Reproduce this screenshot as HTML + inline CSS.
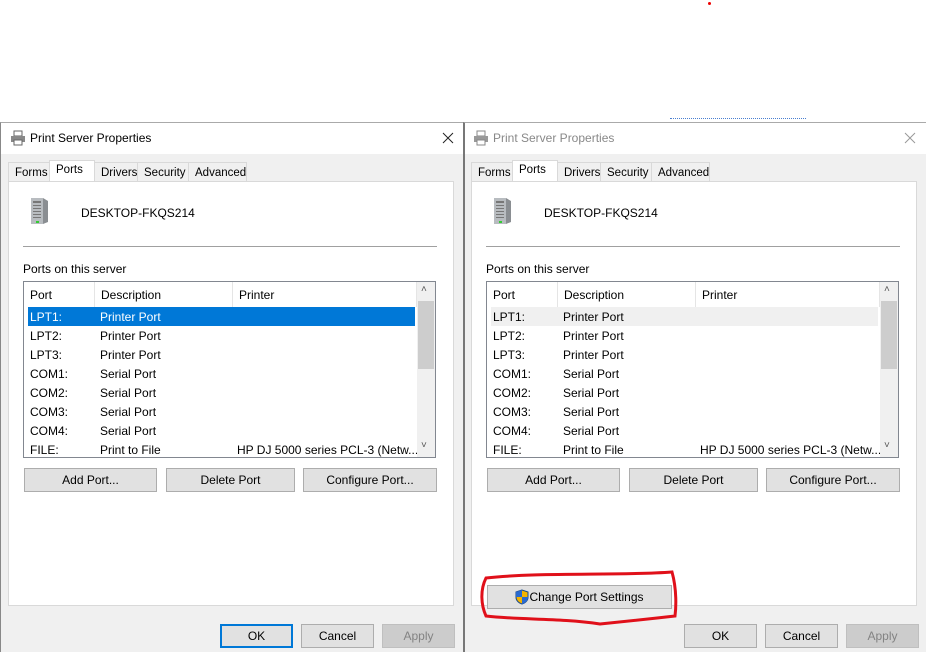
<!DOCTYPE html>
<html><head><meta charset="utf-8"><style>
*{box-sizing:border-box;margin:0;padding:0}
body{width:926px;height:652px;background:#fff;position:relative;overflow:hidden;font-family:"Liberation Sans",sans-serif;font-size:12px;color:#000}
.a{position:absolute;white-space:nowrap}
.dlg{position:absolute;top:122px;width:464px;height:530px;background:#f0f0f0;border-left:1px solid #888;border-top:1px solid #aaa}
.title{position:absolute;left:0;top:0;width:100%;height:31px;background:#fff}
.title span{position:absolute;left:29px;top:8px;font-size:12px}
.x{position:absolute;right:10px;top:9px}
.panel{position:absolute;left:7px;top:58px;width:446px;height:425px;background:#fff;border:1px solid #d9d9d9}
.tab{position:absolute;top:39px;height:20px;border:1px solid #d9d9d9;border-bottom:none;background:#f0f0f0;font-size:11.5px;padding:4px 0 0 6px;white-space:nowrap}
.tab.sel{top:37px;height:23px;background:#fff;padding-top:3px}
.btn{position:absolute;height:24px;background:#e1e1e1;border:1px solid #adadad;text-align:center;line-height:22px;font-size:12px;white-space:nowrap}
.lv{position:absolute;left:14px;top:99px;width:413px;height:177px;border:1px solid #828790;background:#fff;overflow:hidden}
.hd{position:absolute;top:0;height:25px;border-right:1px solid #e5e5e5;padding:6px 0 0 6px}
.row{position:absolute;left:4px;width:387px;height:19px}
.row span{position:absolute;top:3px;white-space:nowrap}
.sb{position:absolute;right:0;top:0;width:18px;height:175px;background:#f0f0f0}
</style></head><body>
<div class="a" style="left:708px;top:2px;width:3px;height:3px;background:#e00;border-radius:50%"></div>
<div class="a" style="left:670px;top:118px;width:136px;height:3px;border-top:1px dotted #4a7fd0"></div>

<!-- LEFT -->
<div class="dlg" style="left:0">
 <div class="title">
  <svg class="a" style="left:9px;top:7px" width="16" height="16" viewBox="0 0 16 16"><rect x="4" y="1" width="8" height="5" fill="#fff" stroke="#666"/><rect x="1" y="6" width="14" height="6" fill="#888"/><rect x="4" y="10" width="8" height="5" fill="#fff" stroke="#666"/></svg>
  <span>Print Server Properties</span><svg class="x" width="12" height="12" viewBox="0 0 12 12"><path d="M1 1L11 11M11 1L1 11" stroke="#222" stroke-width="1"/></svg></div>
 <div class="tab" style="left:7px;width:42px">Forms</div>
 <div class="tab sel" style="left:48px;width:46px">Ports</div>
 <div class="tab" style="left:93px;width:44px">Drivers</div>
 <div class="tab" style="left:136px;width:52px">Security</div>
 <div class="tab" style="left:187px;width:59px">Advanced</div>
 <div class="panel">
  <svg class="a" style="left:20px;top:14px" width="22" height="30" viewBox="0 0 22 30"><path d="M2 2h12v26H2z" fill="#b8bcc0"/><path d="M14 2l5 3v21l-5 2z" fill="#8a8e92"/><g fill="#777"><rect x="4" y="5" width="8" height="2"/><rect x="4" y="9" width="8" height="1"/><rect x="4" y="12" width="8" height="1"/><rect x="4" y="15" width="8" height="1"/><rect x="4" y="18" width="8" height="1"/><rect x="4" y="21" width="8" height="1"/></g><rect x="7" y="25" width="3" height="2" fill="#3c3"/></svg>
  <div class="a" style="left:72px;top:24px">DESKTOP-FKQS214</div>
  <div class="a" style="left:14px;top:64px;width:414px;height:1px;background:#a0a0a0"></div>
  <div class="a" style="left:14px;top:80px">Ports on this server</div>
  <div class="lv">
   <div class="hd" style="left:0;width:71px">Port</div>
   <div class="hd" style="left:71px;width:138px">Description</div>
   <div class="hd" style="left:209px;width:184px">Printer</div>
   <div class="row" style="top:25px;background:#0078d7;color:#fff"><span style="left:2px">LPT1:</span><span style="left:72px">Printer Port</span></div>
   <div class="row" style="top:44px"><span style="left:2px">LPT2:</span><span style="left:72px">Printer Port</span></div>
   <div class="row" style="top:63px"><span style="left:2px">LPT3:</span><span style="left:72px">Printer Port</span></div>
   <div class="row" style="top:82px"><span style="left:2px">COM1:</span><span style="left:72px">Serial Port</span></div>
   <div class="row" style="top:101px"><span style="left:2px">COM2:</span><span style="left:72px">Serial Port</span></div>
   <div class="row" style="top:120px"><span style="left:2px">COM3:</span><span style="left:72px">Serial Port</span></div>
   <div class="row" style="top:139px"><span style="left:2px">COM4:</span><span style="left:72px">Serial Port</span></div>
   <div class="row" style="top:158px"><span style="left:2px">FILE:</span><span style="left:72px">Print to File</span><span style="left:209px">HP DJ 5000 series PCL-3 (Netw...</span></div>
   <div class="sb"><div class="a" style="left:4px;top:2px;font-size:10px;color:#555">˄</div><div class="a" style="left:1px;top:19px;width:16px;height:68px;background:#cdcdcd"></div><div class="a" style="left:4px;top:158px;font-size:10px;color:#555">˅</div></div>
  </div>
  <div class="btn" style="left:15px;top:286px;width:133px">Add Port...</div>
  <div class="btn" style="left:157px;top:286px;width:129px">Delete Port</div>
  <div class="btn" style="left:294px;top:286px;width:134px">Configure Port...</div>
 </div>
 <div class="btn" style="left:219px;top:501px;width:73px;border:2px solid #0078d7;line-height:20px">OK</div>
 <div class="btn" style="left:300px;top:501px;width:73px">Cancel</div>
 <div class="btn" style="left:381px;top:501px;width:73px;background:#ccc;border-color:#bfbfbf;color:#838383">Apply</div>
</div>

<!-- RIGHT -->
<div class="dlg" style="left:463px;border-left:2px solid #777;width:463px">
 <div class="title">
  <svg class="a" style="left:8px;top:7px" width="16" height="16" viewBox="0 0 16 16"><rect x="4" y="1" width="8" height="5" fill="#fff" stroke="#888"/><rect x="1" y="6" width="14" height="6" fill="#999"/><rect x="4" y="10" width="8" height="5" fill="#fff" stroke="#888"/></svg>
  <span style="left:28px;color:#888">Print Server Properties</span><svg class="x" width="12" height="12" viewBox="0 0 12 12"><path d="M1 1L11 11M11 1L1 11" stroke="#999" stroke-width="1"/></svg></div>
 <div class="tab" style="left:6px;width:42px">Forms</div>
 <div class="tab sel" style="left:47px;width:46px">Ports</div>
 <div class="tab" style="left:92px;width:44px">Drivers</div>
 <div class="tab" style="left:135px;width:52px">Security</div>
 <div class="tab" style="left:186px;width:59px">Advanced</div>
 <div class="panel" style="left:6px">
  <svg class="a" style="left:20px;top:14px" width="22" height="30" viewBox="0 0 22 30"><path d="M2 2h12v26H2z" fill="#b8bcc0"/><path d="M14 2l5 3v21l-5 2z" fill="#8a8e92"/><g fill="#777"><rect x="4" y="5" width="8" height="2"/><rect x="4" y="9" width="8" height="1"/><rect x="4" y="12" width="8" height="1"/><rect x="4" y="15" width="8" height="1"/><rect x="4" y="18" width="8" height="1"/><rect x="4" y="21" width="8" height="1"/></g><rect x="7" y="25" width="3" height="2" fill="#3c3"/></svg>
  <div class="a" style="left:72px;top:24px">DESKTOP-FKQS214</div>
  <div class="a" style="left:14px;top:64px;width:414px;height:1px;background:#a0a0a0"></div>
  <div class="a" style="left:14px;top:80px">Ports on this server</div>
  <div class="lv">
   <div class="hd" style="left:0;width:71px">Port</div>
   <div class="hd" style="left:71px;width:138px">Description</div>
   <div class="hd" style="left:209px;width:184px">Printer</div>
   <div class="row" style="top:25px;background:#f0f0f0"><span style="left:2px">LPT1:</span><span style="left:72px">Printer Port</span></div>
   <div class="row" style="top:44px"><span style="left:2px">LPT2:</span><span style="left:72px">Printer Port</span></div>
   <div class="row" style="top:63px"><span style="left:2px">LPT3:</span><span style="left:72px">Printer Port</span></div>
   <div class="row" style="top:82px"><span style="left:2px">COM1:</span><span style="left:72px">Serial Port</span></div>
   <div class="row" style="top:101px"><span style="left:2px">COM2:</span><span style="left:72px">Serial Port</span></div>
   <div class="row" style="top:120px"><span style="left:2px">COM3:</span><span style="left:72px">Serial Port</span></div>
   <div class="row" style="top:139px"><span style="left:2px">COM4:</span><span style="left:72px">Serial Port</span></div>
   <div class="row" style="top:158px"><span style="left:2px">FILE:</span><span style="left:72px">Print to File</span><span style="left:209px">HP DJ 5000 series PCL-3 (Netw...</span></div>
   <div class="sb"><div class="a" style="left:4px;top:2px;font-size:10px;color:#555">˄</div><div class="a" style="left:1px;top:19px;width:16px;height:68px;background:#cdcdcd"></div><div class="a" style="left:4px;top:158px;font-size:10px;color:#555">˅</div></div>
  </div>
  <div class="btn" style="left:15px;top:286px;width:133px">Add Port...</div>
  <div class="btn" style="left:157px;top:286px;width:129px">Delete Port</div>
  <div class="btn" style="left:294px;top:286px;width:134px">Configure Port...</div>
  <div class="btn" style="left:15px;top:403px;width:185px;padding-left:14px">Change Port Settings
   <svg class="a" style="left:27px;top:3px" width="14" height="16" viewBox="0 0 14 16"><path d="M7 1L1 3v5c0 4 3 6 6 7 3-1 6-3 6-7V3z" fill="#f4b400" stroke="#1a4a8a"/><path d="M7 1v7H1V3zM7 8h6c0 4-3 6-6 7z" fill="#2a6ad0"/></svg></div>
 </div>
 <div class="btn" style="left:219px;top:501px;width:73px">OK</div>
 <div class="btn" style="left:300px;top:501px;width:73px">Cancel</div>
 <div class="btn" style="left:381px;top:501px;width:73px;background:#ccc;border-color:#bfbfbf;color:#838383">Apply</div>
</div>

<svg class="a" style="left:0;top:0" width="926" height="652"><path d="M486 578 C540 572 620 576 672 572 C677 590 676 608 675 616 C640 620 620 622 600 624 C560 618 520 620 486 616 C481 605 480 590 486 578Z" fill="none" stroke="#e0101a" stroke-width="3"/></svg>
</body></html>
